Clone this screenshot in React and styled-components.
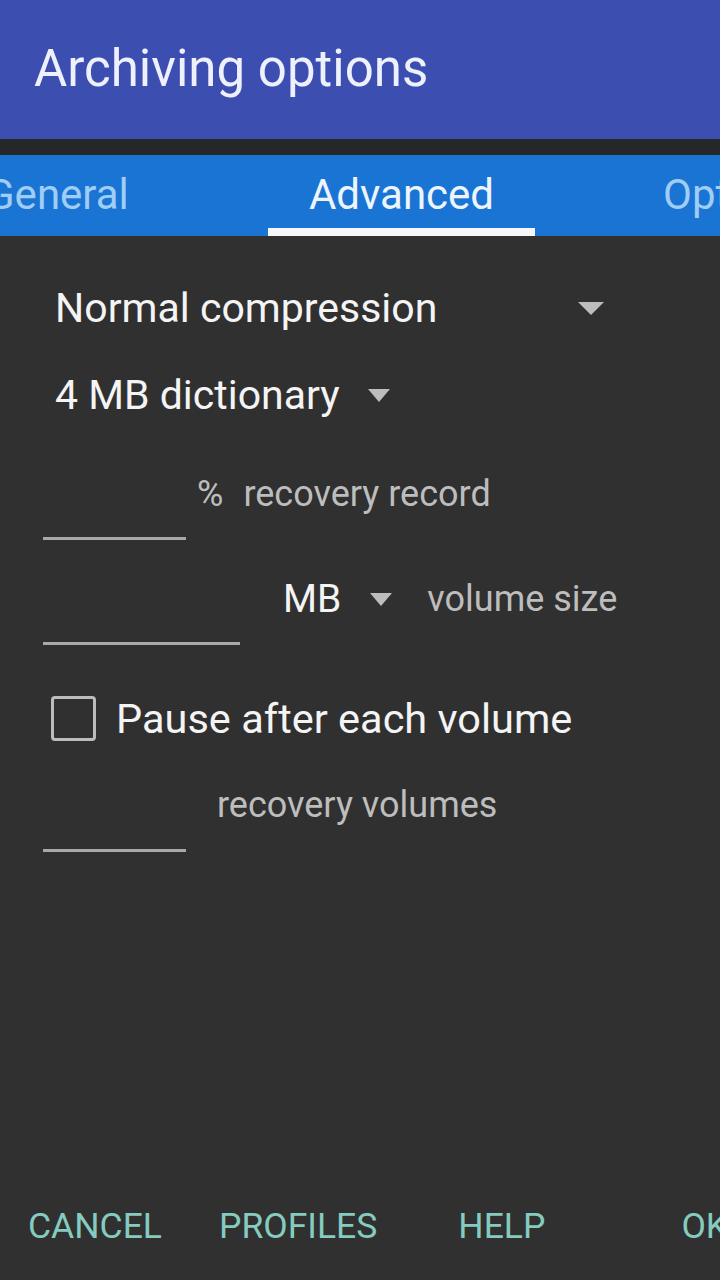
import React from "react";
import styled, { createGlobalStyle } from "styled-components";

const Global = createGlobalStyle`
  html, body { margin: 0; padding: 0; background: #303030; }
  body { font-family: Roboto, "Noto Sans", sans-serif; }
  #root { min-height: 1280px; }
`;

const Screen = styled.div`
  width: 720px;
  height: 1280px;
  background: #303030;
  display: flex;
  flex-direction: column;
  overflow: hidden;
`;

const Header = styled.header`
  height: 139px;
  background: #3c4fb1;
  display: flex;
  align-items: center;
  padding-left: 34px;
  box-sizing: border-box;
`;

const Title = styled.h1`
  margin: 0;
  font-weight: 400;
  font-size: 51px;
  color: #eef0fb;
  letter-spacing: 0px;
  padding-bottom: 2px;
`;

const Divider = styled.div`
  height: 16px;
  background: #262729;
`;

const TabBar = styled.nav`
  height: 81px;
  background: #1a74d4;
  display: flex;
  overflow: hidden;
`;

const Tab = styled.div`
  flex: 0 0 ${(p) => p.$w}px;
  margin-left: ${(p) => p.$ml || 0}px;
  position: relative;
  display: flex;
  align-items: center;
  justify-content: ${(p) => p.$justify || "center"};
  padding-left: ${(p) => p.$pl || 0}px;
  box-sizing: border-box;
  font-size: 42px;
  color: ${(p) => (p.$active ? "#eef4fc" : "#9fcdf5")};
  white-space: nowrap;
  padding-bottom: 2px;
`;

const Indicator = styled.span`
  position: absolute;
  left: 0;
  right: 0;
  bottom: 0;
  height: 8px;
  background: #f5f7fa;
`;

const Body = styled.main`
  flex: 1;
  display: flex;
  flex-direction: column;
  align-items: flex-start;
  padding: 50px 0 0 43px;
  box-sizing: border-box;
`;

const SpinnerRow = styled.div`
  display: flex;
  align-items: center;
  width: ${(p) => (p.$w ? `${p.$w}px` : "auto")};
  justify-content: space-between;
  gap: 28px;
  padding-left: 12px;
  box-sizing: border-box;
  height: 44px;
  font-size: 41px;
  color: #f4f4f4;
  margin-top: ${(p) => p.$mt || 0}px;
`;

const Arrow = styled.span`
  width: 0;
  height: 0;
  border-left: ${(p) => p.$half || 12}px solid transparent;
  border-right: ${(p) => p.$half || 12}px solid transparent;
  border-top: 13px solid #bdbdbd;
  flex: none;
`;

const FieldRow = styled.div`
  display: flex;
  align-items: flex-start;
  margin-top: ${(p) => p.$mt || 0}px;
`;

const Edit = styled.div`
  width: ${(p) => p.$w}px;
  height: ${(p) => p.$h}px;
  border-bottom: 3px solid #a9a9a9;
  flex: none;
  box-sizing: border-box;
`;

const Label = styled.span`
  color: #bdbdbd;
  margin-left: ${(p) => p.$ml || 0}px;
  margin-top: ${(p) => p.$mt || 0}px;
  white-space: nowrap;
  font-size: 36px;
`;

const UnitSpinner = styled.div`
  display: flex;
  align-items: center;
  gap: 29px;
  margin-left: 43px;
  margin-top: ${(p) => p.$mt || 0}px;
  font-size: 39px;
  color: #f4f4f4;
`;

const CheckRow = styled.label`
  display: flex;
  align-items: center;
  gap: 20px;
  margin-top: 49px;
  margin-left: 8px;
  font-size: 41.5px;
  color: #f4f4f4;
`;

const Box = styled.span`
  width: 45px;
  height: 45px;
  border: 3.5px solid #bcbcbc;
  border-radius: 4px;
  box-sizing: border-box;
  flex: none;
`;

const Footer = styled.footer`
  height: 104px;
  display: flex;
  align-items: flex-start;
  padding: 33px 0 0 28px;
  box-sizing: border-box;
`;

const Btn = styled.span`
  font-size: 35.5px;
  color: #86cbbf;
  text-transform: uppercase;
  margin-left: ${(p) => p.$ml || 0}px;
  white-space: nowrap;
  line-height: 1;
`;

export default function App() {
  return (
    <Screen>
      <Global />
      <Header>
        <Title>Archiving options</Title>
      </Header>
      <Divider />
      <TabBar>
        <Tab $w={282} $ml={-14} $justify="flex-start">General</Tab>
        <Tab $w={267} $active>
          Advanced
          <Indicator />
        </Tab>
        <Tab $w={240} $justify="flex-start" $pl={128}>Options</Tab>
      </TabBar>
      <Body>
        <SpinnerRow $w={561}>
          <span>Normal compression</span>
          <Arrow $half={13} />
        </SpinnerRow>
        <SpinnerRow $mt={43}>
          <span>4 MB dictionary</span>
          <Arrow $half={11} />
        </SpinnerRow>
        <FieldRow $mt={30}>
          <Edit $w={143} $h={93} />
          <Label $ml={11} $mt={26}>%</Label>
          <Label $ml={20} $mt={26}>recovery record</Label>
        </FieldRow>
        <FieldRow $mt={12}>
          <Edit $w={197} $h={93} />
          <UnitSpinner $mt={24}>
            <span>MB</span>
            <Arrow $half={11} />
          </UnitSpinner>
          <Label $ml={35} $mt={26}>volume size</Label>
        </FieldRow>
        <CheckRow>
          <Box />
          <span>Pause after each volume</span>
        </CheckRow>
        <FieldRow $mt={16}>
          <Edit $w={143} $h={93} />
          <Label $ml={31} $mt={25}>recovery volumes</Label>
        </FieldRow>
      </Body>
      <Footer>
        <Btn>Cancel</Btn>
        <Btn $ml={57}>Profiles</Btn>
        <Btn $ml={81}>Help</Btn>
        <Btn $ml={136}>OK</Btn>
      </Footer>
    </Screen>
  );
}
